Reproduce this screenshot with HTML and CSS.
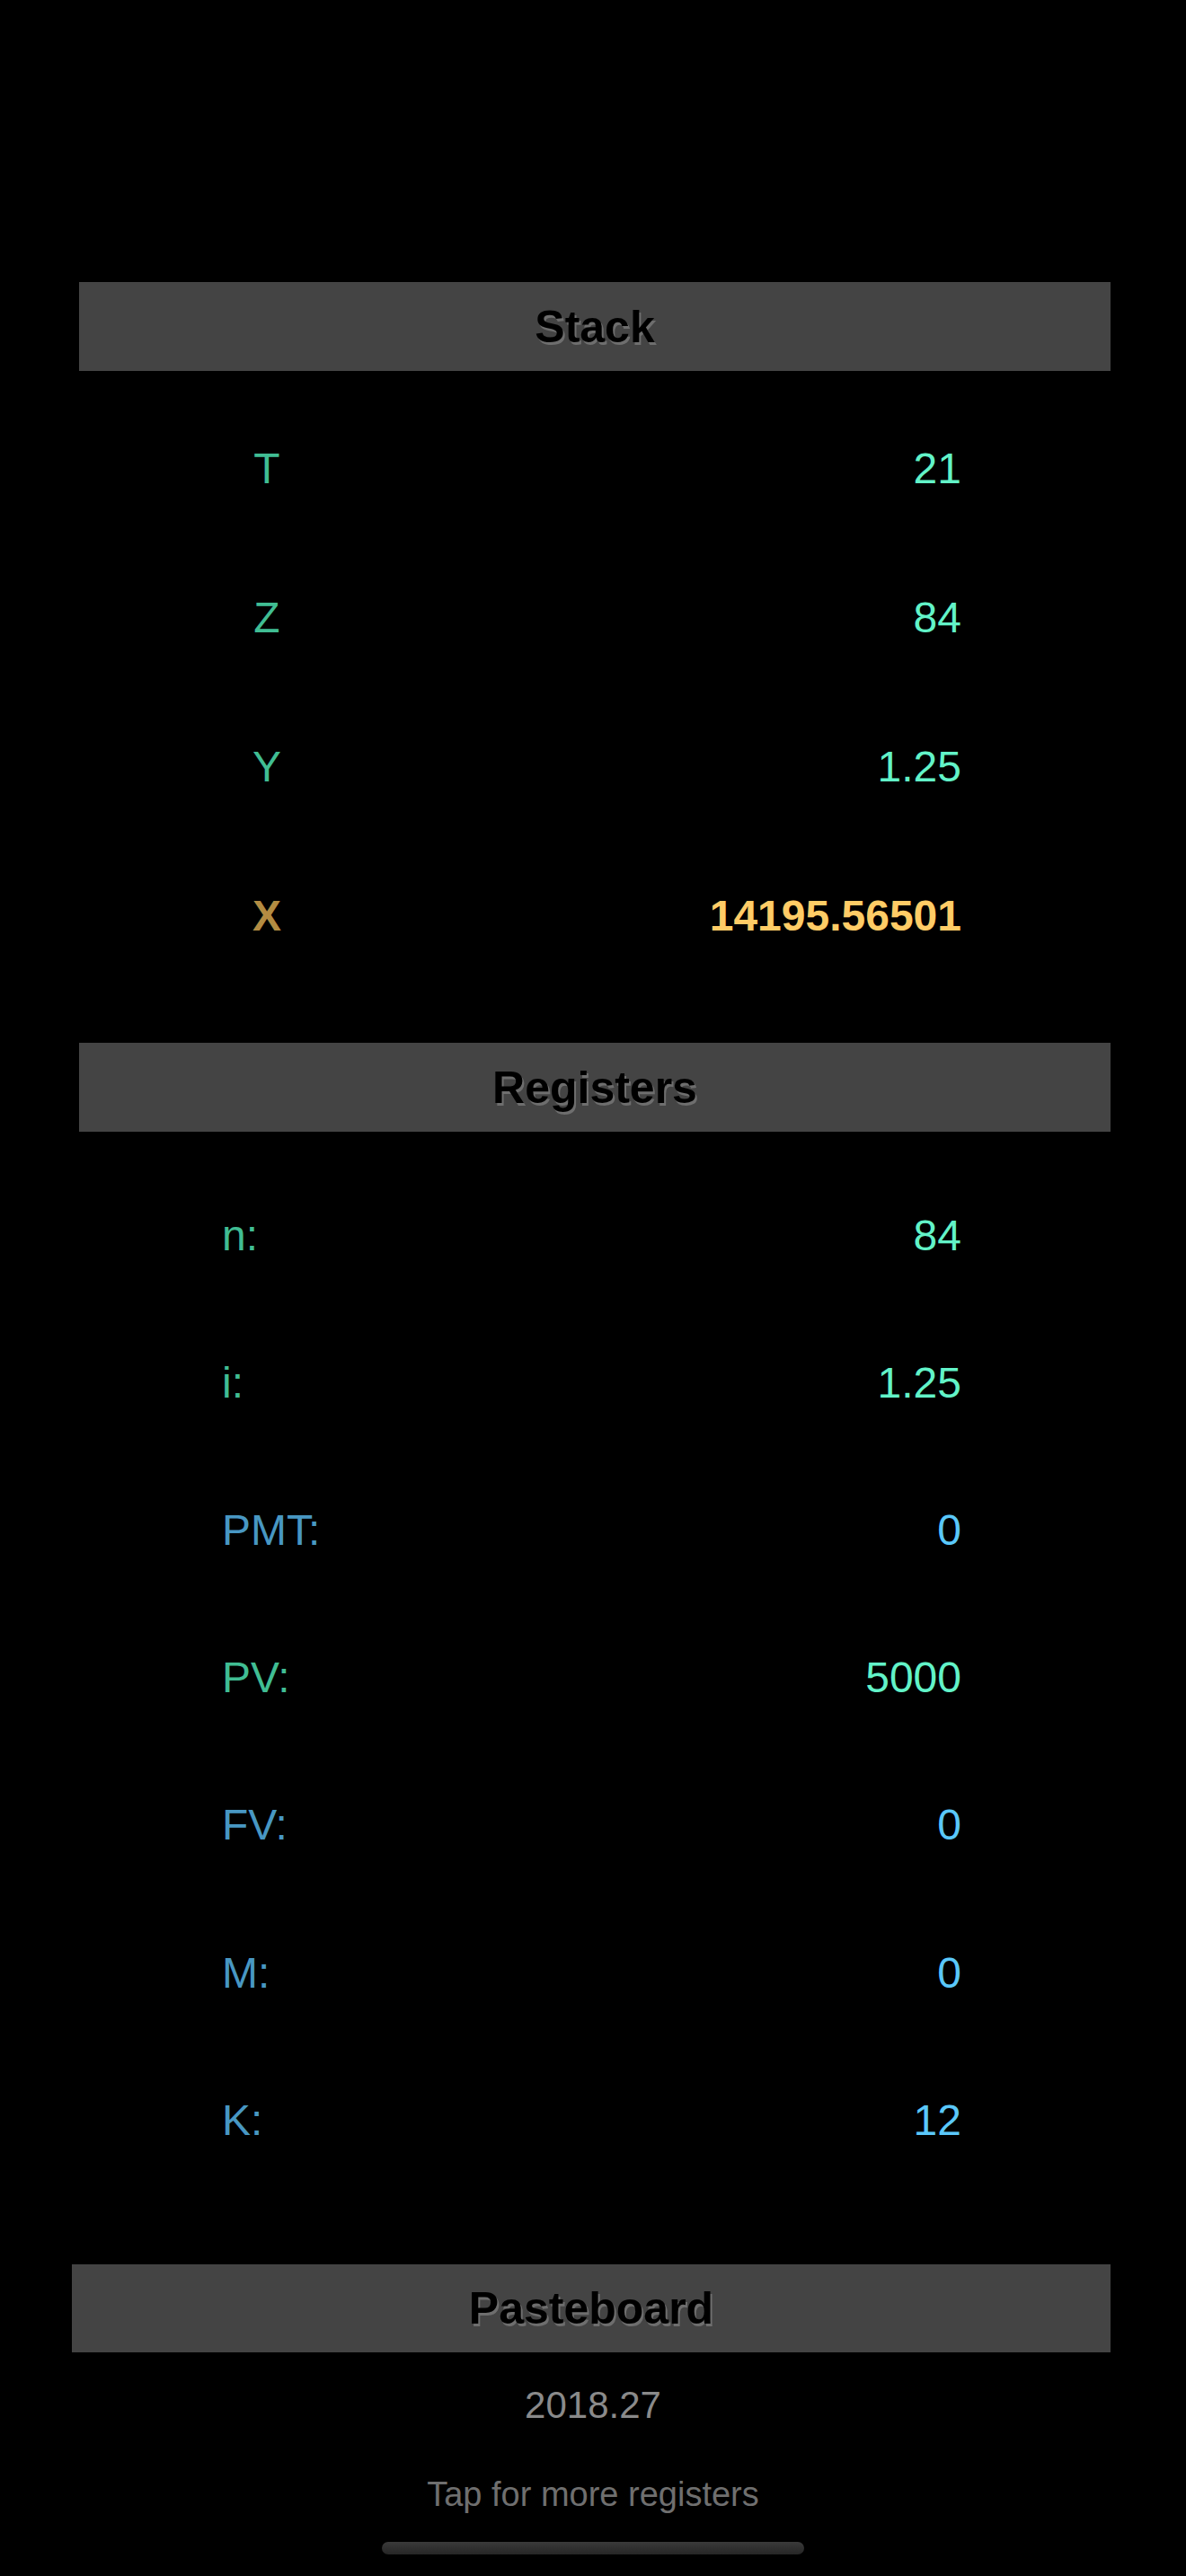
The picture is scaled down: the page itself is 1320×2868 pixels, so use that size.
FILE: index.html
```html
<!DOCTYPE html>
<html>
<head>
<meta charset="utf-8">
<link rel="stylesheet" href="styles.css">
</head>
<body>
<div class="app">
  <div class="header">Stack</div>
  <div class="stack">
    <div class="srow green"><span class="slabel">T</span><span class="val">21</span></div>
    <div class="srow green"><span class="slabel">Z</span><span class="val">84</span></div>
    <div class="srow green"><span class="slabel">Y</span><span class="val">1.25</span></div>
    <div class="srow gold"><span class="slabel">X</span><span class="val">14195.56501</span></div>
  </div>
  <div class="header">Registers</div>
  <div class="regs">
    <div class="rrow green"><span class="rlabel">n:</span><span class="val">84</span></div>
    <div class="rrow green"><span class="rlabel">i:</span><span class="val">1.25</span></div>
    <div class="rrow blue"><span class="rlabel">PMT:</span><span class="val">0</span></div>
    <div class="rrow green"><span class="rlabel">PV:</span><span class="val">5000</span></div>
    <div class="rrow blue"><span class="rlabel">FV:</span><span class="val">0</span></div>
    <div class="rrow blue"><span class="rlabel">M:</span><span class="val">0</span></div>
    <div class="rrow blue"><span class="rlabel">K:</span><span class="val">12</span></div>
  </div>
  <div class="header paste">Pasteboard</div>
  <div class="pastevalue">2018.27</div>
  <div class="more">Tap for more registers</div>
  <div class="homebar"></div>
</div>
</body>
</html>
```
FILE: styles.css
```css
html, body {
  margin: 0;
  padding: 0;
  background: #000;
}
body {
  font-family: "Liberation Sans", Arial, sans-serif;
}
.app {
  width: 1320px;
  height: 2868px;
  padding-top: 314px;
  box-sizing: border-box;
  display: flex;
  flex-direction: column;
}
.header {
  height: 99px;
  margin: 0 84px 0 88px;
  background: #444444;
  display: flex;
  align-items: center;
  justify-content: center;
  font-weight: bold;
  font-size: 50px;
  color: #000;
  text-shadow: 2px 3px 0 #6e6e6e;
}
.header.paste {
  margin-left: 80px;
  height: 98px;
}
.stack {
  padding: 25px 0 59px;
  display: flex;
  flex-direction: column;
}
.srow {
  height: 166px;
  display: flex;
  align-items: center;
  justify-content: space-between;
  padding: 0 250px 0 257px;
  font-size: 48px;
}
.slabel {
  width: 80px;
  text-align: center;
}
.regs {
  padding: 33px 0 79px;
  display: flex;
  flex-direction: column;
}
.rrow {
  height: 164.2px;
  display: flex;
  align-items: center;
  justify-content: space-between;
  padding: 0 250px 0 247px;
  font-size: 48px;
}
.green .slabel, .green .rlabel { color: #40bd93; }
.green .val { color: #62f3c8; }
.gold { font-weight: bold; }
.gold .slabel { color: #b38c42; }
.gold .val { color: #ffcc66; }
.blue .rlabel { color: #4897c3; }
.blue .val { color: #5ac8fa; }
.pastevalue {
  margin-top: 35px;
  height: 48px;
  line-height: 48px;
  text-align: center;
  font-size: 42px;
  color: #8a8a8a;
}
.more {
  margin-top: 53px;
  height: 44px;
  line-height: 44px;
  text-align: center;
  font-size: 38px;
  color: #6f6f6f;
}
.homebar {
  margin: 31px auto 0;
  width: 470px;
  height: 14px;
  border-radius: 7px;
  background: linear-gradient(#3a3a3a, #262626);
}
```
